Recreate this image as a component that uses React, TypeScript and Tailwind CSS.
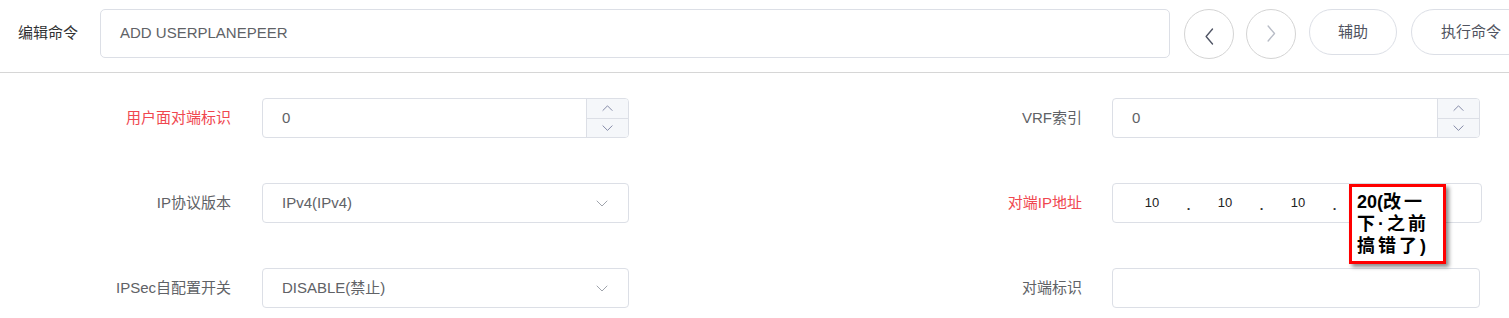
import React from "react";

const font = { fontFamily: '"Liberation Sans", "Noto Sans CJK SC", sans-serif' };

function Chevron({ dir, className, size = 10, stroke = "#606266", sw = 1 }: { dir: "up" | "down" | "left" | "right"; className?: string; size?: number; stroke?: string; sw?: number }) {
  const paths: Record<string, string> = {
    up: "M1 7 L6 2 L11 7",
    down: "M1 2 L6 7 L11 2",
    left: "M8 1 L2 8 L8 15",
    right: "M2 1 L8 8 L2 15",
  };
  const vertical = dir === "up" || dir === "down";
  const vb = vertical ? "0 0 12 9" : "0 0 10 16";
  return (
    <svg className={className} viewBox={vb} width={vertical ? size : (size * 10) / 16} height={vertical ? (size * 9) / 12 : size} fill="none">
      <path d={paths[dir]} stroke={stroke} strokeWidth={sw} strokeLinecap="round" strokeLinejoin="round" />
    </svg>
  );
}

function Label({ text, red, w }: { text: string; red?: boolean; w: string }) {
  return (
    <div className={`${w} shrink-0 text-right text-[15px] ${red ? "text-[#f0474f]" : "text-[#606266]"}`}>{text}</div>
  );
}

function NumberInput({ w }: { w: string }) {
  return (
    <div className={`${w} h-[40px] shrink-0 flex border border-[#dcdfe6] rounded-[4px] bg-white overflow-hidden`}>
      <div className="flex-1 flex items-center pl-[19px] text-[15px] text-[#606266]">0</div>
      <div className="w-[42px] flex flex-col border-l border-[#dcdfe6] bg-[#f5f7fa]">
        <div className="flex-1 flex items-center justify-center border-b border-[#dcdfe6]">
          <Chevron dir="up" size={11} stroke="#7a80a0" />
        </div>
        <div className="flex-1 flex items-center justify-center">
          <Chevron dir="down" size={11} stroke="#7a80a0" />
        </div>
      </div>
    </div>
  );
}

function SelectInput({ w, value }: { w: string; value: string }) {
  return (
    <div className={`${w} h-[40px] shrink-0 flex items-center justify-between border border-[#dcdfe6] rounded-[4px] bg-white pl-[19px] pr-[20px]`}>
      <span className="text-[15px] text-[#606266]">{value}</span>
      <Chevron dir="down" size={12} stroke="#a0a4ac" />
    </div>
  );
}

function IpInput({ w }: { w: string }) {
  const seg = (v: string) => (
    <div className="w-[60px] text-center text-[13px] text-[#222]">{v}</div>
  );
  const dot = <div className="w-[13px] text-center text-[13px] text-[#333] pt-[6px] font-bold">.</div>;
  return (
    <div className={`${w} h-[40px] shrink-0 flex items-center border border-[#dcdfe6] rounded-[4px] bg-white pl-[9px]`}>
      {seg("10")}
      {dot}
      {seg("10")}
      {dot}
      {seg("10")}
      {dot}
      <div className="w-[60px]" />
    </div>
  );
}

function TextInput({ w }: { w: string }) {
  return <div className={`${w} h-[40px] shrink-0 border border-[#dcdfe6] rounded-[4px] bg-white`} />;
}

export default function App() {
  return (
    <div className="w-[1509px] h-[318px] overflow-hidden bg-white relative" style={font}>
      {/* top bar */}
      <div className="flex items-start h-[73px] pt-[9px] pl-[18px] border-b border-[#d6d6d6] w-[1560px]">
        <div className="w-[82px] shrink-0 h-[49px] flex items-center text-[15px] text-[#303133]">编辑命令</div>
        <div className="w-[1070px] shrink-0 h-[49px] border border-[#dcdfe6] rounded-[5px] flex items-center pl-[19px] text-[15px] text-[#606266]">
          ADD USERPLANEPEER
        </div>
        <button className="ml-[14px] w-[50px] h-[50px] shrink-0 rounded-full border border-[#d4d4d4] flex items-center justify-center pt-[4px]">
          <Chevron dir="left" size={17} stroke="#505565" sw={1.3} />
        </button>
        <button className="ml-[12px] w-[50px] h-[50px] shrink-0 rounded-full border border-[#d4d4d4] flex items-center justify-center pb-[2px]">
          <Chevron dir="right" size={17} stroke="#b8bcc6" sw={1.3} />
        </button>
        <button className="ml-[13px] w-[88px] h-[46px] shrink-0 rounded-full border border-[#dcdfe6] text-[15px] text-[#505360]">辅助</button>
        <button className="ml-[14px] w-[120px] h-[46px] shrink-0 rounded-full border border-[#dcdfe6] text-[15px] text-[#505360] text-left pl-[29px]">执行命令</button>
      </div>

      {/* form */}
      <div className="grid grid-cols-[850px_1fr] gap-y-[45px] pt-[25px]">
        <div className="flex items-center h-[40px]">
          <Label text="用户面对端标识" red w="w-[231px]" />
          <div className="ml-[31px]"><NumberInput w="w-[367px]" /></div>
        </div>
        <div className="flex items-center h-[40px]">
          <Label text="VRF索引" w="w-[232px]" />
          <div className="ml-[30px]"><NumberInput w="w-[368px]" /></div>
        </div>

        <div className="flex items-center h-[40px]">
          <Label text="IP协议版本" w="w-[231px]" />
          <div className="ml-[31px]"><SelectInput w="w-[367px]" value="IPv4(IPv4)" /></div>
        </div>
        <div className="flex items-center h-[40px]">
          <Label text="对端IP地址" red w="w-[232px]" />
          <div className="ml-[30px]"><IpInput w="w-[370px]" /></div>
        </div>

        <div className="flex items-center h-[40px]">
          <Label text="IPSec自配置开关" w="w-[231px]" />
          <div className="ml-[31px]"><SelectInput w="w-[367px]" value="DISABLE(禁止)" /></div>
        </div>
        <div className="flex items-center h-[40px]">
          <Label text="对端标识" w="w-[232px]" />
          <div className="ml-[30px]"><TextInput w="w-[368px]" /></div>
        </div>
      </div>

      {/* annotation */}
      <div className="absolute left-[1349px] top-[184px] w-[97px] h-[80px] border-[3px] border-[#ff0000] bg-white shadow-[3px_3px_4px_rgba(0,0,0,0.45)] pl-[5px] pt-[4px] text-[18px] leading-[22px] font-bold text-black whitespace-nowrap">
        <div>20(<span className="tracking-[3px]">改一</span></div>
        <div className="tracking-[3px]">下·之前</div>
        <div><span className="tracking-[3px]">搞错了</span>)</div>
      </div>
    </div>
  );
}
